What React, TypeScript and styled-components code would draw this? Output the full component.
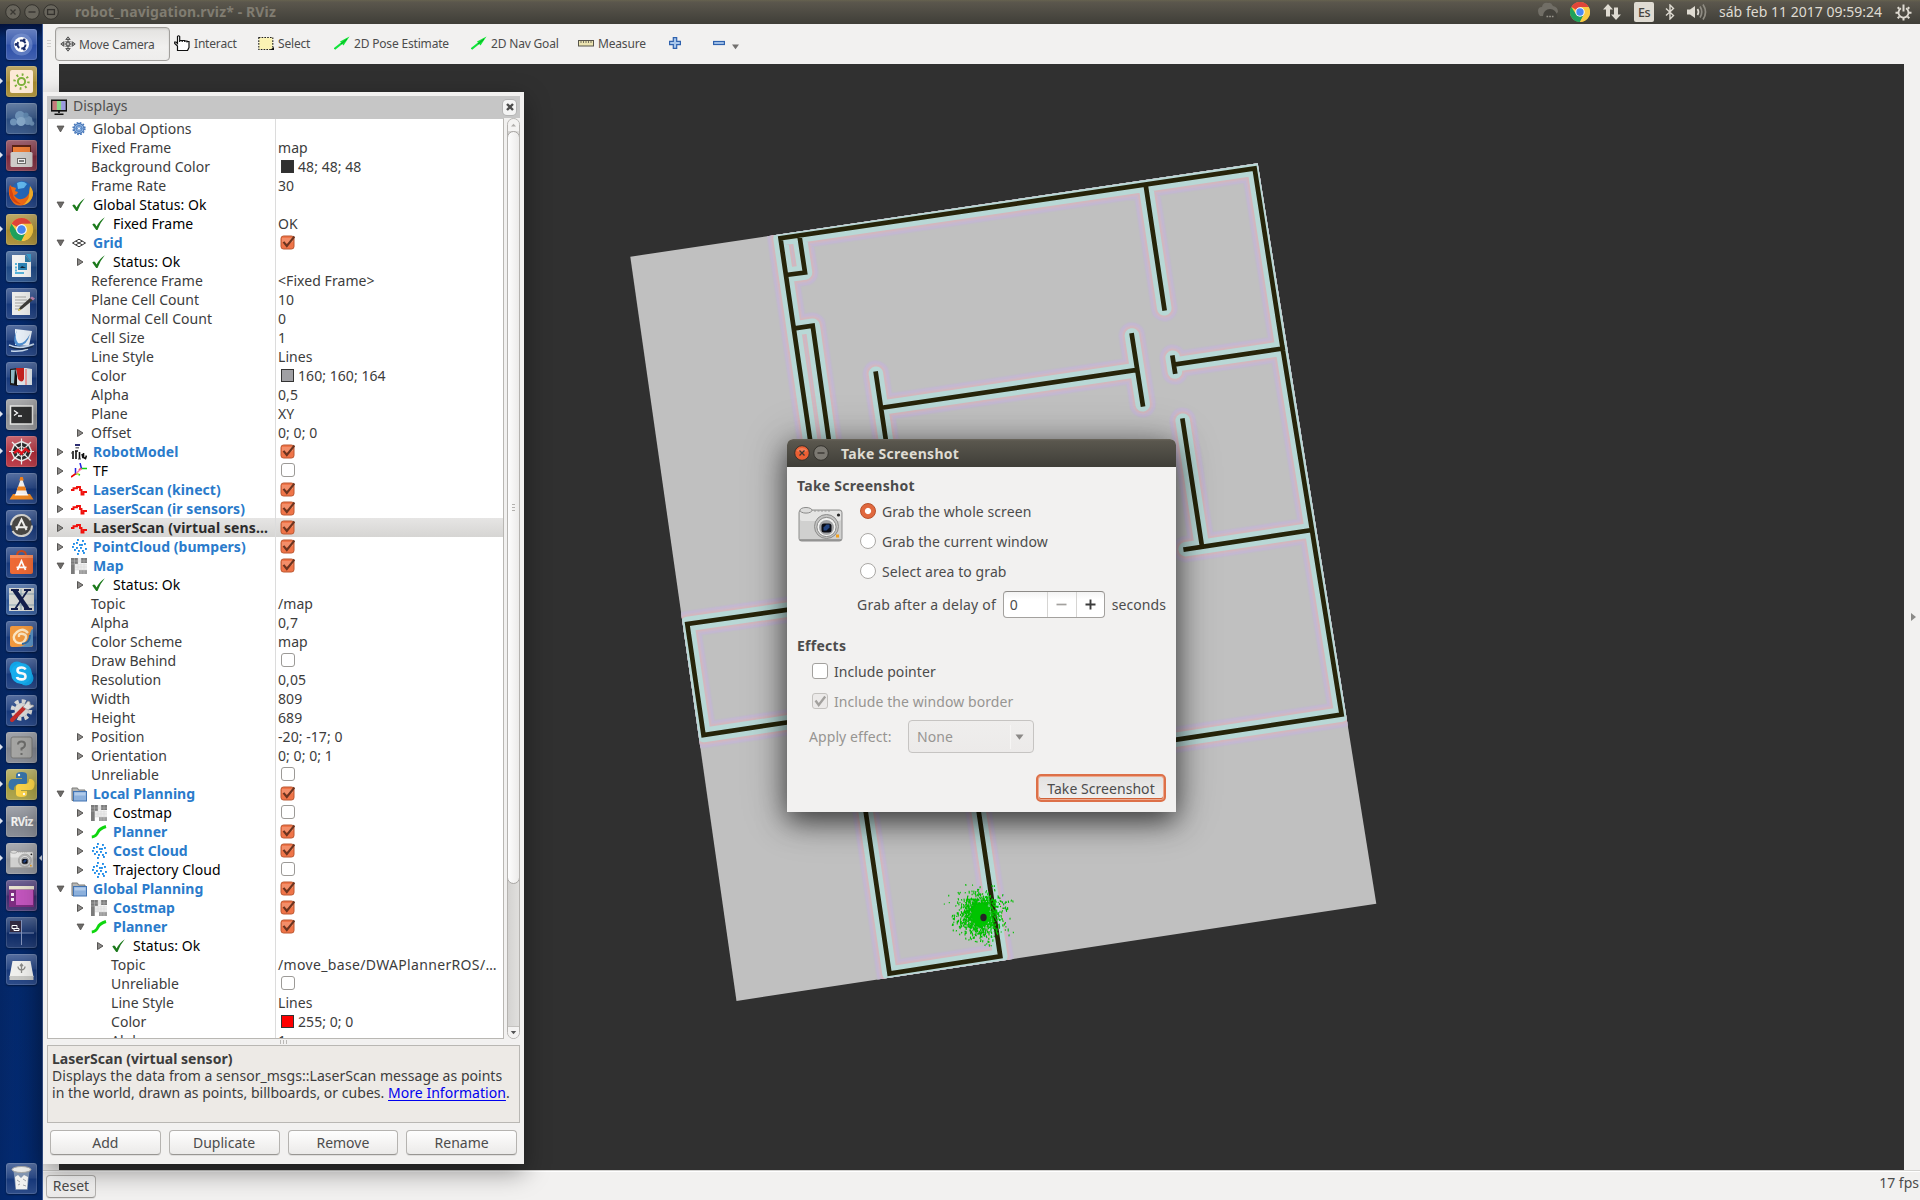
import React from 'react';
import styled, { createGlobalStyle, css } from 'styled-components';

const Global = createGlobalStyle`
  * { box-sizing: border-box; }
  html, body { margin: 0; padding: 0; background: #303030; }
  body { font-family: "Noto Sans", "Open Sans", sans-serif; font-size: 14px; color: #3c3c3c; overflow: hidden; }
  svg { display: block; flex: none; }
`;

/* ---------- frame ---------- */

const Screen = styled.div`
  position: relative;
  width: 1920px;
  height: 1200px;
  display: flex;
  flex-direction: column;
  overflow: hidden;
`;

const TopPanel = styled.header`
  height: 24px;
  flex: none;
  display: flex;
  align-items: center;
  padding: 0 8px 0 5px;
  background: linear-gradient(#66624f 0, #5b574d 2px, #3f3e38 100%);
`;

const PanelButtons = styled.div`
  display: flex;
  gap: 3px;
`;

const PanelTitle = styled.div`
  margin-left: 16px;
  font-weight: 700;
  font-size: 14px;
  line-height: 24px;
  color: #807c71;
  letter-spacing: 0.13px;
`;

const Tray = styled.div`
  margin-left: auto;
  display: flex;
  align-items: center;
`;

const TrayItem = styled.div<{ $w: number; $gap: number }>`
  width: ${(p) => p.$w}px;
  margin-right: ${(p) => p.$gap}px;
`;

const Keyboard = styled.div`
  width: 20px;
  height: 20px;
  border-radius: 2px;
  background: #dfdbd2;
  color: #45433d;
  font-size: 12.5px;
  font-weight: 500;
  line-height: 21px;
  text-align: center;
  letter-spacing: -0.5px;
`;

const Clock = styled.div`
  width: 163px;
  white-space: nowrap;
  font-size: 14px;
  line-height: 24px;
  color: #dfdbd2;
  letter-spacing: 0.02px;
`;

const Body = styled.div`
  flex: 1;
  display: flex;
  min-height: 0;
`;

/* ---------- launcher ---------- */

const Launcher = styled.nav`
  width: 43px;
  flex: none;
  display: flex;
  flex-direction: column;
  gap: 6px;
  padding: 5px 5px 6px 6px;
  background: linear-gradient(90deg, rgba(0, 0, 0, 0.08), transparent 40%, rgba(0, 0, 0, 0.1)),
    linear-gradient(#02133f 0, #052a70 14px, #052867 60%, #032a72 100%);
  border-right: 1px solid #3c5a97;
`;

const Tile = styled.div<{ $bg?: string; $last?: boolean }>`
  position: relative;
  width: 31px;
  height: 31px;
  flex: none;
  border-radius: 3px;
  background: linear-gradient(rgba(255, 255, 255, 0.28), rgba(255, 255, 255, 0.08) 48%, rgba(255, 255, 255, 0) 52%, rgba(255,255,255,0.1)),
    ${(p) => p.$bg || '#17397c'};
  box-shadow: inset 0 0 0 1px rgba(255, 255, 255, 0.13), 0 1px 2px rgba(0, 0, 0, 0.4);
  ${(p) => p.$last && css`margin-top: auto;`}
`;

const Pip = styled.i<{ $right?: boolean }>`
  position: absolute;
  top: 12px;
  ${(p) => (p.$right ? 'right: -5px; border-right: 3px solid #dde3ee;' : 'left: -6px; border-left: 3px solid #dde3ee;')}
  border-top: 3px solid transparent;
  border-bottom: 3px solid transparent;
`;

/* ---------- main window ---------- */

const Main = styled.main`
  flex: 1;
  display: flex;
  flex-direction: column;
  min-width: 0;
  background: #f2f1f0;
`;

const Toolbar = styled.div`
  height: 40px;
  flex: none;
  display: flex;
  align-items: center;
  padding-left: 4px;
`;

const Grip = styled.div`
  width: 4px;
  height: 8px;
  margin-right: 4px;
  background: repeating-linear-gradient(#cfcecc 0 1px, transparent 1px 3px);
`;

const Tool = styled.div<{ $w: number; $active?: boolean }>`
  width: ${(p) => p.$w}px;
  height: 34px;
  flex: none;
  display: flex;
  align-items: center;
  gap: 4px;
  padding: 0 0 2px 4px;
  white-space: nowrap;
  font-size: 12px;
  letter-spacing: -0.18px;
  color: #4c4c4c;
  ${(p) =>
    p.$active &&
    css`
      gap: 3px;
      padding-bottom: 0;
      border: 1px solid #a19f9c;
      border-radius: 4px;
      background: linear-gradient(#e3e2e0, #f1f0ef 60%, #eeedec);
      box-shadow: inset 0 1px 2px rgba(0, 0, 0, 0.12);
    `}
`;

const Middle = styled.div`
  flex: 1;
  display: flex;
  align-items: center;
  padding-left: 16px;
`;

const Viewport = styled.div`
  width: 1845px;
  height: 1106px;
  background: #303030;
`;

const Collapse = styled.i`
  margin-left: 7px;
  border-left: 5px solid #8b8a88;
  border-top: 4px solid transparent;
  border-bottom: 4px solid transparent;
`;

const StatusBar = styled.footer`
  height: 30px;
  flex: none;
  display: flex;
  justify-content: space-between;
  align-items: center;
  padding: 1px 1px 0 3px;
  border-top: 1px solid #d3d2d0;
  box-shadow: inset 0 1px 0 #fff;
`;

const Fps = styled.div`
  padding-bottom: 8px;
  color: #4c4c4c;
`;

const Button = styled.button<{ $w: number; $h: number }>`
  width: ${(p) => p.$w}px;
  height: ${(p) => p.$h}px;
  padding: 0;
  border: 1px solid #b5b3b0;
  border-bottom-color: #989693;
  border-radius: 4px;
  background: linear-gradient(#fefefe, #f3f2f1 60%, #ebeae9);
  box-shadow: 0 1px 0 rgba(0, 0, 0, 0.08);
  font: inherit;
  line-height: 1;
  color: #4c4c4c;
`;

/* ---------- displays window ---------- */

const Displays = styled.section`
  position: absolute;
  left: 43px;
  top: 92px;
  width: 481px;
  height: 1072px;
  padding: 4px;
  display: flex;
  flex-direction: column;
  background: #f2f1f0;
  box-shadow: 0 8px 24px rgba(0, 0, 0, 0.4);
`;

const DisplaysHead = styled.div`
  height: 22px;
  flex: none;
  display: flex;
  align-items: center;
  gap: 6px;
  padding: 0 4px;
  background: #c6c6c6;
  color: #505050;
  line-height: 20px;
`;

const HeadText = styled.span`
  padding-bottom: 2px;
`;

const CloseBox = styled.div`
  margin-left: auto;
  width: 13px;
  height: 15px;
  display: flex;
  align-items: center;
  justify-content: center;
  border-radius: 4px;
  background: #f4f4f4;
  box-shadow: 0 0 0 1px #b4b4b4;
`;

const TreeArea = styled.div`
  display: flex;
  gap: 3px;
  height: 921px;
  flex: none;
`;

const Tree = styled.div`
  width: 457px;
  border: 1px solid #b9b7b3;
  border-top-color: #c6c6c6;
  background: #fff;
  overflow: hidden;
`;

const Row = styled.div<{ $selected?: boolean }>`
  height: 19px;
  display: flex;
  ${(p) => p.$selected && 'background: linear-gradient(#e6e5e4, #d6d5d3);'}
`;

type Tone = 'plain' | 'ok' | 'on' | 'sel';
const toneColor: Record<Tone, string> = { plain: '#3c3c3c', ok: '#000', on: '#2a7bcb', sel: '#2c2c2c' };

const NameCell = styled.div<{ $level: number; $tone: Tone }>`
  width: 227px;
  flex: none;
  display: flex;
  align-items: center;
  padding-left: ${(p) => 7 + p.$level * 20}px;
  white-space: nowrap;
  overflow: hidden;
  color: ${(p) => toneColor[p.$tone]};
  font-weight: ${(p) => (p.$tone === 'on' || p.$tone === 'sel' ? 700 : 400)};
  letter-spacing: ${(p) => (p.$tone === 'sel' ? 0.13 : p.$tone === 'on' ? 0.04 : 0.04)}px;
`;

const Expander = styled.span`
  width: 16px;
  height: 19px;
  flex: none;
  display: flex;
  align-items: center;
`;

const RowIcon = styled.span`
  width: 16px;
  margin-right: 6px;
  flex: none;
`;

const ValueCell = styled.div<{ $wide?: boolean }>`
  flex: 1;
  display: flex;
  align-items: center;
  padding-left: 2px;
  border-left: 1px solid #dcdcdc;
  white-space: nowrap;
  letter-spacing: ${(p) => (p.$wide ? 0.34 : 0.06)}px;
`;

const Swatch = styled.i<{ $color: string }>`
  width: 13px;
  height: 13px;
  margin: 0 4px 0 3px;
  border: 1px solid #333;
  background: ${(p) => p.$color};
`;

const Unchecked = styled.i`
  width: 14px;
  height: 14px;
  margin: 0 0 1px 3px;
  border: 1px solid #9c9a97;
  border-radius: 3px;
  background: #fff;
`;

const Scrollbar = styled.div`
  width: 13px;
  display: flex;
  flex-direction: column;
  border: 1px solid #b5b3b0;
  border-radius: 7px;
  background: linear-gradient(90deg, #d4d3d1, #e0dfdd);
  overflow: hidden;
`;

const ScrollButton = styled.div<{ $down?: boolean }>`
  height: 12px;
  flex: none;
  display: flex;
  align-items: center;
  justify-content: center;
  background: #f4f3f2;
  ${(p) => p.$down && 'margin-top: auto; border-top: 1px solid #c4c2bf;'}
`;

const Thumb = styled.div`
  height: 753px;
  margin: 0 -1px;
  display: flex;
  align-items: center;
  justify-content: center;
  border: 1px solid #a8a6a3;
  border-radius: 7px;
  background: linear-gradient(90deg, #fdfdfd, #ecebea);
`;

const ThumbGrip = styled.i`
  width: 3px;
  height: 8px;
  background: repeating-linear-gradient(#b3b1ae 0 1px, transparent 1px 3px);
`;

const Splitter = styled.div`
  height: 6px;
  flex: none;
  display: flex;
  align-items: center;
  justify-content: center;
  &::after {
    content: '';
    width: 7px;
    height: 4px;
    background: repeating-linear-gradient(90deg, #bbb9b6 0 1px, transparent 1px 3px);
  }
`;

const Description = styled.div`
  height: 78px;
  flex: none;
  padding: 4px 4px;
  border: 1px solid #b9b7b3;
  background: #edeae6;
  line-height: 17px;
  white-space: nowrap;
  letter-spacing: 0.03px;
`;

const More = styled.a`
  color: #0000ee;
  text-decoration: underline;
  text-underline-offset: 2px;
`;

const DisplayButtons = styled.div`
  display: flex;
  gap: 8px;
  padding: 7px 3px 0;
`;

/* ---------- dialog ---------- */

const Dialog = styled.section`
  position: absolute;
  left: 787px;
  top: 439px;
  width: 389px;
  height: 373px;
  display: flex;
  flex-direction: column;
  border-radius: 6px 6px 0 0;
  background: #f2f1f0;
  color: #4c4c4c;
  letter-spacing: 0.08px;
  box-shadow: 0 9px 28px rgba(0, 0, 0, 0.62), 0 4px 46px rgba(0, 0, 0, 0.25);
`;

const DialogBar = styled.div`
  height: 28px;
  flex: none;
  display: flex;
  align-items: center;
  gap: 3px;
  padding-left: 7px;
  border-radius: 6px 6px 0 0;
  background: linear-gradient(#6a665b 0, #5a574e 2px, #3f3e38 100%);
`;

const DialogTitle = styled.div`
  margin-left: 9px;
  font-weight: 700;
  letter-spacing: 0.3px;
  color: #dfdbd2;
`;

const DialogBody = styled.div`
  flex: 1;
  display: flex;
  flex-direction: column;
  padding: 9px 10px 10px;
`;

const Heading = styled.h2`
  margin: 0;
  font-size: 14px;
  line-height: 19px;
  font-weight: 700;
  letter-spacing: 0.27px;
`;

const GrabArea = styled.div`
  display: flex;
  padding-left: 1px;
`;

const CameraCell = styled.div`
  width: 62px;
  padding-top: 12px;
`;

const Options = styled.div<{ $indent: number; $top: number }>`
  display: flex;
  flex-direction: column;
  padding: ${(p) => p.$top}px 0 0 ${(p) => p.$indent}px;
`;

const Option = styled.label<{ $off?: boolean }>`
  height: 30px;
  display: flex;
  align-items: center;
  gap: 6px;
  color: ${(p) => (p.$off ? '#979592' : '#4c4c4c')};
`;

const Radio = styled.i<{ $on?: boolean }>`
  width: 16px;
  height: 16px;
  border-radius: 50%;
  border: 1px solid ${(p) => (p.$on ? '#b8502a' : '#aaa8a5')};
  background: ${(p) => (p.$on ? 'radial-gradient(#fff 0 2.6px, #e0683e 3.6px)' : '#fff')};
`;

const Check = styled.i<{ $off?: boolean }>`
  width: 16px;
  height: 16px;
  display: flex;
  border: 1px solid ${(p) => (p.$off ? '#c4c2bf' : '#a3a19e')};
  border-radius: 3px;
  background: ${(p) => (p.$off ? '#eceae9' : '#fff')};
`;

const DelayRow = styled.div`
  display: flex;
  align-items: center;
  height: 36px;
  padding-left: 60px;
  white-space: nowrap;
`;

const DelayLabel = styled.span`
  letter-spacing: 0.22px;
`;

const Spinner = styled.div`
  width: 102px;
  height: 27px;
  margin: 0 7px 0 auto;
  display: flex;
  border: 1px solid #a3a19e;
  border-top-color: #8d8b88;
  border-radius: 4px;
  background: linear-gradient(#f4f4f4, #fff 30%);
`;

const SpinCell = styled.div<{ $w: number; $first?: boolean }>`
  width: ${(p) => p.$w}px;
  display: flex;
  align-items: center;
  justify-content: ${(p) => (p.$first ? 'flex-start' : 'center')};
  padding-left: ${(p) => (p.$first ? 6 : 0)}px;
  border-left: ${(p) => (p.$first ? 'none' : '1px solid #d6d5d3')};
`;

const EffectRow = styled.div`
  display: flex;
  align-items: center;
  height: 33px;
  margin-top: 4px;
  padding-left: 12px;
  color: #979592;
`;

const EffectLabel = styled.span`
  width: 99px;
`;

const Combo = styled.div`
  width: 126px;
  height: 33px;
  display: flex;
  align-items: center;
  justify-content: space-between;
  padding: 0 0 0 8px;
  border: 1px solid #c6c4c2;
  border-radius: 4px;
  background: linear-gradient(#efeeed, #eceae9);
`;

const ComboArrow = styled.span`
  height: 24px;
  width: 23px;
  display: flex;
  align-items: center;
  padding-left: 4px;
  border-left: 1px solid #f6f5f4;
`;

const TakeButton = styled.button`
  width: 130px;
  height: 28px;
  margin: auto 0 0 auto;
  padding: 0;
  border: 2px solid #dd7048;
  border-radius: 5px;
  background: linear-gradient(#e2e1e0, #f1f0ef);
  box-shadow: inset 0 0 0 1px #eda98e, inset 0 -1px 0 1px #cf6238;
  font: inherit;
  letter-spacing: 0.05px;
  color: #4c4c4c;
`;

/* ---------- small drawings ---------- */

const Svg = ({ s = 16, h, vb, children }: { s?: number; h?: number; vb?: string; children: React.ReactNode }) => (
  <svg width={s} height={h ?? s} viewBox={vb ?? `0 0 ${s} ${h ?? s}`} fill="none">
    {children}
  </svg>
);

const WinButton = ({ kind, hot }: { kind: 'close' | 'min' | 'max'; hot?: 'red' | 'gray' }) => (
  <Svg s={16}>
    <circle cx="8" cy="8" r="7.3" fill={hot === 'red' ? '#ea5f33' : hot === 'gray' ? '#7c7972' : '#68655c'} stroke="#34322d" />
    {hot === 'red' && <path d="M2.5 6a6 5 0 0 1 11 0q-5.5 2-11 0" fill="#f58a66" opacity=".7" />}
    {kind === 'close' && <path d="M5.500 5.500l5 5m0-5l-5 5" stroke="#3a3833" strokeWidth="1.300" />}
    {kind === 'min' && <path d="M4.500 8h7" stroke="#33312d" strokeWidth="1.300" />}
    {kind === 'max' && <rect x="4.600" y="5.600" width="6.800" height="4.800" stroke="#33312d" strokeWidth="1.300" />}
  </Svg>
);

const ChromeMark = ({ c = 10, r = 10 }: { c?: number; r?: number }) => (
  <g transform={`translate(${c} ${c}) scale(${r / 10})`}>
    <circle r="10" fill="#fbcb43" />
    <path d="M0 0L-8.700-5A10 10 0 0 1 8.700-5L0-4.500z" fill="#e0453a" />
    <path d="M-8.700-5A10 10 0 0 0 0 10L4.200 2.200L-4 2z" fill="#1fa15d" />
    <path d="M8.700-5H0v2l4 5L0 10A10 10 0 0 0 8.700-5" fill="#fbcb43" />
    <circle r="4.700" fill="#fff" />
    <circle r="3.700" fill="#4a8af4" />
  </g>
);

const CameraArt = () => (
  <>
    <rect x="1" y="3" width="43" height="31" rx="2.500" fill="#d0d0cf" stroke="#8e8e8d" />
    <rect x="2" y="4" width="41" height="10" rx="2" fill="#e4e4e3" />
    <path d="M2 33h41" stroke="#8a8a89" strokeWidth="1.500" />
    <ellipse cx="8" cy="3.300" rx="6" ry="2.800" fill="#dcdcdb" stroke="#8a8a89" />
    <path d="M16 4h16" stroke="#999" strokeDasharray="2 1.500" />
    <circle cx="28.500" cy="19.500" r="12" fill="#c4c4c3" stroke="#8b8b8a" />
    <circle cx="28.500" cy="20" r="9.600" fill="#f1f1f0" stroke="#8a8a89" />
    <circle cx="28.500" cy="20.500" r="7.500" fill="#a3a4a6" />
    <rect x="23.500" y="16.500" width="10" height="9" rx="2.500" fill="#0b0d16" />
    <path d="M25.500 20.500l3-3h3v3l-3 3h-3z" fill="#23437f" />
    <circle cx="40.500" cy="8" r="1.600" fill="#222" />
    <rect x="38" y="27.500" width="3" height="3" fill="#f0a020" />
  </>
);

type IconName =
  | 'gear' | 'check' | 'grid' | 'robot' | 'tf' | 'laser' | 'cloud' | 'map' | 'folder' | 'path';

const cloudDots = [[6, 0], [11, 1], [2, 4], [5, 3], [8, 5], [13, 4], [1, 7], [5, 8], [9, 8], [3, 10], [14, 9], [7, 11], [11, 11], [6, 14], [12, 13], [10, 5]];

const icons: Record<IconName, React.ReactNode> = {
  gear: (
    <>
      <circle cx="8" cy="7.500" r="5" fill="#8fb4e2" stroke="#3566ab" strokeWidth="1" />
      <circle cx="8" cy="7.500" r="5.900" stroke="#4677ba" strokeWidth="1.500" strokeDasharray="1.700 1.390" />
      <circle cx="8" cy="7.500" r="3" stroke="#4677ba" strokeWidth=".8" />
      <path d="M8 4v7M4.500 7.500h7" stroke="#5b8bc9" strokeWidth=".8" />
      <circle cx="8" cy="7.500" r="1" fill="#fff" />
    </>
  ),
  check: <path d="M1.300 8.600Q2.800 6.900 4 8l1.600 2.600Q8.200 5 13.800 1.300 9.200 6.500 6.500 14H5.200z" fill="#1c7a1c" />,
  grid: <path d="M1.500 8L8 4.200 14.500 8 8 11.800zM4.700 6.100l6.600 3.800M4.700 9.900l6.600-3.800" stroke="#333" strokeWidth="1" />,
  robot: (
    <>
      <rect x="4" y="0" width="5" height="2" fill="#2d2f73" />
      <rect x="4.500" y="3" width="3.500" height="1.500" fill="#777" />
      <path d="M2 7v8M5 6.500V15M4 7h3M8.500 8v7M11 10l1 4M12.500 9v4.500l2 1 1-3" stroke="#111" strokeWidth="1.600" />
      <path d="M.5 9.500l1-2M7 15h3" stroke="#444" />
    </>
  ),
  tf: (
    <>
      <path d="M0 14l5-3.500M8 7l3-2" stroke="#e00" strokeWidth="1.600" />
      <path d="M4.500 10.500V5M10.500 5.500L9 0" stroke="#22d" strokeWidth="1.500" />
      <path d="M10.500 5.500H16M5 10.500L9 12" stroke="#1c1" strokeWidth="1.500" />
      <path d="M5 10.500l5.500-5" stroke="#f7a" strokeWidth="1.400" />
      <path d="M6 11.500l2-1" stroke="#ee4" strokeWidth="1.500" />
    </>
  ),
  laser: <path d="M0 8h2.500V6.300H6V5h3v3h1.500v4.500h2V10H16" stroke="#f0100c" strokeWidth="1.900" />,
  cloud: (
    <>
      {cloudDots.map(([x, y], i) => (
        <rect key={i} x={x} y={y} width="1.900" height="1.900" fill="#1f8ce8" />
      ))}
    </>
  ),
  map: (
    <>
      <path d="M0 0h7v6H4v10H0zM10 0h6v5h-6z" fill="#7b7b7b" />
      <path d="M7 0h3v5H7zM4 6h12v6H4z" fill="#ececec" />
      <path d="M8 12h8v4H8z" fill="#9c9c9c" />
      <path d="M0 3h16M0 6h16M4 9h12M4 12h12M3.500 0v16M7 0v12M10 0v16M13 0v16" stroke="#cfcfcf" strokeWidth=".4" />
    </>
  ),
  folder: (
    <>
      <path d="M1 14.500V2h5.500l1 2H14v10.500z" fill="#b7b7b4" stroke="#7b7b78" />
      <rect x="2.500" y="5.500" width="13" height="9.500" fill="#8cb0dc" stroke="#4274b3" />
      <path d="M3.500 6.500h11v3h-11z" fill="#b1cbea" />
    </>
  ),
  path: <path d="M.8 13Q5 12.600 6.800 8.500T15 2.500" stroke="#0ed60e" strokeWidth="2.900" />,
};

const CheckedBox = () => (
  <Svg s={17} h={17} vb="0 0 17 17">
    <g transform="translate(2.500 1)">
      <rect x=".5" y="1" width="13" height="13" rx="2.500" fill="#ef7448" stroke="#bb5730" />
      <path d="M1.500 3h11v4q-6 2-11 0z" fill="#f59a78" opacity=".7" />
      <path d="M3 6.800l3.300 4.200L14 1.500" stroke="#6b3420" strokeWidth="2.100" />
    </g>
  </Svg>
);

const Arrow = ({ open }: { open?: boolean }) => (
  <Svg s={10}>
    {open ? (
      <path d="M2 2h7L5.500 8z" fill="#6c6a68" stroke="#4a4846" strokeWidth=".7" />
    ) : (
      <path d="M2.500 1.500v7L8 5z" fill="#8c8a88" stroke="#4a4846" strokeWidth=".9" />
    )}
  </Svg>
);

/* ---------- toolbar ---------- */

const NavArrow = () => (
  <Svg>
    <path d="M.5 14L8 8" stroke="#12e33b" strokeWidth="2.200" />
    <path d="M6 6.500l9.500-5L9.500 10.500z" fill="#10e832" />
    <path d="M7 9l6-5" stroke="#0a9a2a" strokeWidth="1" />
  </Svg>
);

const tools: { label: string; w: number; active?: boolean; icon: React.ReactNode }[] = [
  {
    label: 'Move Camera', w: 115, active: true,
    icon: (
      <Svg>
        <path d="M8 1v14M1 8h14M8 .8L5.800 3.500h4.400zM8 15.200l-2.200-2.700h4.400zM.8 8l2.700-2.200v4.400zM15.200 8l-2.700-2.200v4.400z" stroke="#4a4a4a" strokeWidth=".9" fill="#fff" />
        <ellipse cx="8" cy="8" rx="5" ry="2.500" stroke="#666" strokeWidth=".8" />
        <circle cx="8" cy="8" r="2" fill="#bbb" stroke="#444" />
      </Svg>
    ),
  },
  {
    label: 'Interact', w: 84,
    icon: (
      <Svg>
        <path d="M3.500 15.500V11L.7 8.500V7H2l1.500 1.500V1.500Q4.500 0 5.700 1.500V7V5.500h2.500V7V5.500h2.500V7V6h2.300V7.500V6.500h2v6l-1.500 3z" fill="#fff" stroke="#111" strokeWidth="1.200" />
      </Svg>
    ),
  },
  {
    label: 'Select', w: 76,
    icon: (
      <Svg>
        <rect x=".8" y="2.500" width="14" height="12" fill="#fbf3b4" stroke="#222" strokeWidth="1.100" strokeDasharray="1.600 1.200" />
        <path d="M12 15h4v-3z" fill="#111" />
      </Svg>
    ),
  },
  { label: '2D Pose Estimate', w: 137, icon: <NavArrow /> },
  { label: '2D Nav Goal', w: 107, icon: <NavArrow /> },
  {
    label: 'Measure', w: 91,
    icon: (
      <Svg>
        <rect x=".5" y="5.500" width="15" height="5.500" fill="#ebe3b0" stroke="#57544a" />
        <path d="M3 6v2M5.500 6v2M8 6v2M10.500 6v2M13 6v2" stroke="#57544a" strokeWidth=".8" />
      </Svg>
    ),
  },
  {
    label: '', w: 44,
    icon: (
      <Svg s={12}>
        <path d="M4.300 .6h3.400v3.700h3.700v3.400H7.700v3.700H4.300V7.700H.6V4.300h3.700z" fill="#a9c7ec" stroke="#2f62ae" strokeWidth="1.200" />
      </Svg>
    ),
  },
  {
    label: '', w: 50,
    icon: (
      <Svg s={28} h={16} vb="0 0 28 16">
        <rect x=".6" y="6.500" width="10.800" height="3" fill="#a9c7ec" stroke="#2f62ae" strokeWidth="1.200" />
        <path d="M19 9.500h7l-3.500 4.700z" fill="#73716f" />
      </Svg>
    ),
  },
];

/* ---------- launcher contents ---------- */

const launcherItems: { bg?: string; pip?: boolean; pipRight?: boolean; art: React.ReactNode }[] = [
  {
    bg: '#2c4fa8',
    art: (
      <>
        <circle cx="15.500" cy="15.500" r="11" fill="#8fa6dc" opacity=".45" />
        <circle cx="15.500" cy="15.500" r="7.500" fill="#fff" />
        <circle cx="15.500" cy="15.500" r="4" stroke="#1d2f6b" strokeWidth="2" strokeDasharray="6.400 2" />
        <circle cx="10" cy="15.500" r="1.400" fill="#1d2f6b" /><circle cx="18.200" cy="10.800" r="1.400" fill="#1d2f6b" /><circle cx="18.200" cy="20.200" r="1.400" fill="#1d2f6b" />
      </>
    ),
  },
  {
    bg: '#a5892e', pip: true,
    art: (
      <>
        <rect x="4" y="4" width="23" height="23" rx="2" fill="#fde9d6" />
        <circle cx="15.500" cy="15.500" r="3.600" stroke="#7fb13c" strokeWidth="2" />
        <circle cx="15.500" cy="15.500" r="7" stroke="#7fb13c" strokeWidth="2.400" strokeDasharray="1.800 3.700" />
      </>
    ),
  },
  {
    bg: '#2b4d80',
    art: (
      <g fill="#6f93b8">
        <circle cx="14" cy="13" r="5" /><circle cx="7.500" cy="19" r="3.500" /><circle cx="22" cy="17.500" r="4.500" /><circle cx="15" cy="18.500" r="4.500" fill="#86a8c8" /><circle cx="20" cy="12" r="2.600" fill="#5f86ad" /><circle cx="26" cy="20.500" r="2.300" />
      </g>
    ),
  },
  {
    bg: '#7d2b3d', pip: true,
    art: (
      <>
        <path d="M6 5h19v9H6z" fill="#5c2416" /><path d="M7 7h17v6H7z" fill="#ee7f38" />
        <rect x="4.500" y="12" width="22" height="15" rx="1.500" fill="#cfcdca" /><rect x="11.500" y="18.500" width="8" height="5" fill="#f2f2f2" stroke="#6e6d6a" /><path d="M13 21h5" stroke="#555" strokeWidth="1.500" />
      </>
    ),
  },
  {
    art: (
      <>
        <circle cx="16" cy="14.500" r="10.500" fill="#2467b8" /><path d="M11 6q6-3 10 1l-3 4-6 1z" fill="#62b8ee" />
        <path d="M4 8q1 2 3 2l3 1-1 3 3 1q-1 3-4 3 3 5 8 4t7-6l1-6q5 6 1 12-4 6-10 6.500T6 24q-5-6-2-16" fill="#ee6a16" />
        <path d="M24 9q5 6 2 12-3 6-9 7 6-5 6-10z" fill="#fbb52a" />
        <path d="M4 8q-2 9 2 15 4 4 9 4-8-5-8-10z" fill="#d8450f" />
      </>
    ),
  },
  { bg: '#a5892e', pip: true, art: <g transform="translate(3.500 3.500)"><ChromeMark c={12} r={11.500} /></g> },
  {
    bg: '#1f4a86',
    art: (
      <>
        <path d="M20 3h5v8z" fill="#3ba0d0" /><path d="M6 4h13l6 7v15H6z" fill="#f2f2f1" /><path d="M19 4v7h6z" fill="#2e7ca8" />
        <rect x="12" y="12" width="9" height="7" fill="#2f86b8" /><path d="M9 13h2M9 22h9M9 16.500h2M9 19.500h2" stroke="#57b3da" strokeWidth="2" /><path d="M14 17l2-2 4 2z" fill="#123" />
      </>
    ),
  },
  {
    art: (
      <>
        <rect x="6" y="4" width="18" height="23" fill="#ececea" /><path d="M9 9h11M9 12h12M9 15h10M9 18h8M9 21h6" stroke="#a3a3a0" /><path d="M12 23l2-4 10-9 3 2-11 9z" fill="#3e3c38" /><path d="M24 10l2-1.500 3 2-2 2z" fill="#c486b0" /><path d="M12 23l1-2.500 2 1.500z" fill="#e8d044" />
      </>
    ),
  },
  {
    art: (
      <>
        <path d="M9 4l17 2-3 15-14-1z" fill="#e8f0f8" /><path d="M11 5q-3 8 1 13 6 2 12-9-3 12-12 12-7-3-1-16" fill="#4f8fd0" /><path d="M3 20q11 5 25-1M5 26q10 1 17-2" stroke="#c6d8ec" strokeWidth="1.700" /><path d="M3 21.500q11 5 24 0" stroke="#1c2c44" strokeWidth="1.200" />
      </>
    ),
  },
  {
    art: (
      <>
        <path d="M4 7l8-1v18l-8-1z" fill="#1a1a1c" /><path d="M5 8l6-.5V22l-6-1z" fill="#8fb7c4" /><path d="M11 6h9l6 1v16H11z" fill="#dfe6ea" /><path d="M10 6h8v11q-2 5-6 0z" fill="#c4211f" /><path d="M9 6l2 8v9l-3-1z" fill="#111" /><path d="M20 7v16" stroke="#e88" strokeWidth="1.500" />
      </>
    ),
  },
  {
    bg: '#8c8d90', pip: true,
    art: (
      <>
        <rect x="4.500" y="7" width="22" height="18" fill="#2e2f30" stroke="#e6e6e4" strokeWidth="1.500" /><path d="M8 11.500l3.500 2.500L8 16.500M12 17h4" stroke="#fff" strokeWidth="1.300" />
      </>
    ),
  },
  {
    bg: '#b32d3a', pip: true,
    art: (
      <>
        <path d="M15.500 5.500l7 3 3 7-3 6.500-7 3-7-3-3-6.500 3-7z" fill="#2a2a2b" stroke="#e9e9e8" strokeWidth="1.500" />
        <path d="M15.500 2.500v26M3 15.500h6M22 15.500h6M6 6l19 19M25 6L6 25" stroke="#f1f1f0" strokeWidth="1.200" />
        <path d="M15.500 10.500l3.500 1.500 1.500 3.500L19 19l-3.500 1.500L12 19l-1.500-3.500L12 12z" stroke="#e9e9e8" />
        <path d="M8 17l4-3 3.500 3.500 4-4.500 4 3" stroke="#e0141c" strokeWidth="2.600" />
      </>
    ),
  },
  {
    art: (
      <>
        <path d="M15.500 4l6 17h-12z" fill="#f4f3f1" /><path d="M14.300 4h2.500l1 3.500h-4.500zM12 13.500h7l1.300 4h-9.600z" fill="#f2821c" /><path d="M7 21h17l3.500 5.500h-24z" fill="#f08a22" /><path d="M9.500 21h12l1 1.500h-14z" fill="#fff" />
      </>
    ),
  },
  {
    art: (
      <>
        <circle cx="15.500" cy="15.500" r="10.500" fill="#494845" stroke="#d4d3cf" strokeWidth="2" strokeDasharray="27 6" /><path d="M10.500 20l5-10.500L20.500 20M9.500 17.300h12" stroke="#f2f2f0" strokeWidth="2" />
      </>
    ),
  },
  {
    art: (
      <>
        <path d="M11 9q0-5 4.500-5T20 9" stroke="#c94a1e" strokeWidth="2" /><path d="M4 8h23v17q0 2-2 2H6q-2 0-2-2z" fill="#ee6a35" /><path d="M4 8h23v3H4z" fill="#f58c5d" /><path d="M11.500 23l4-9 4 9M10.500 20.300h10" stroke="#fff" strokeWidth="1.800" />
      </>
    ),
  },
  {
    bg: '#2a5394',
    art: (
      <>
        <path d="M3 4h25v23H3z" fill="#d8d9d4" /><path d="M3 10h25M3 21h25M15 5v21" stroke="#8fa9b4" strokeWidth="1.200" /><path d="M8.500 6l13 19" stroke="#14204e" strokeWidth="4.500" /><path d="M22 6L9 25M5 6h8M18 6h7M5 25h7M18 25h8" stroke="#14204e" strokeWidth="1.800" />
      </>
    ),
  },
  {
    art: (
      <>
        <rect x="4" y="5" width="23" height="21" rx="2" fill="#f0983e" /><path d="M27 8v16q-1 2-4 2H8q13 1 15-9t4-9" fill="#5b93c4" /><path d="M22 12q-5-6-11-1t-1 10q6 3 9-2t-2-6-4 3" stroke="#fbe6c2" strokeWidth="2.400" /><path d="M24 14q0 8-8 9" stroke="#2f6ca8" strokeWidth="2" />
      </>
    ),
  },
  {
    art: (
      <>
        <circle cx="11" cy="11" r="7.500" fill="#12a5e8" /><circle cx="20" cy="20" r="7.500" fill="#12a5e8" /><circle cx="15.500" cy="15.500" r="10.500" fill="#18aeee" /><path d="M19.500 11.500q-1-2-4-2-4 0-4 2.800t4 3 4 3.200-4 2.900-4.500-2.400" stroke="#fff" strokeWidth="2.600" />
      </>
    ),
  },
  {
    art: (
      <>
        <circle cx="15.500" cy="15" r="7" fill="#d9d9d7" /><circle cx="15.500" cy="15" r="8.800" stroke="#d9d9d7" strokeWidth="4" strokeDasharray="3.900 3" /><path d="M6 25L18 13" stroke="#c52e2b" strokeWidth="4" strokeLinecap="round" /><path d="M17 12l5-6 2 1v3h3l1 1-6 4z" fill="#ecebea" stroke="#999" strokeWidth=".7" />
      </>
    ),
  },
  {
    bg: '#7f838c', pip: true,
    art: (
      <>
        <rect x="5" y="5" width="21" height="21" rx="2" fill="#a5a5a3" stroke="#767674" /><path d="M12 12.500q0-3 3.500-3t3.500 3-3.500 4v2M15.500 21v2" stroke="#6c6c6a" strokeWidth="2" />
      </>
    ),
  },
  {
    bg: '#a59c3f', pip: true,
    art: (
      <>
        <path d="M10 10V6q0-3 5.500-3T21 6v7q0 3-3 3h-6q-4 0-4 4v1H6q-4-1-3.500-6T7 10h9V9h-6z" fill="#3873a8" /><path d="M21 21v4q0 3-5.500 3T10 25v-7q0-3 3-3h6q4 0 4-4v-1h2q4 1 3.500 6T24 21h-9v1h6z" fill="#fbd448" /><circle cx="13" cy="6" r="1.200" fill="#fff" /><circle cx="18" cy="25" r="1.200" fill="#fff" />
      </>
    ),
  },
  {
    bg: '#7f838c', pip: true,
    art: <text x="15.500" y="20" textAnchor="middle" fontFamily="Open Sans, sans-serif" fontWeight="700" fontSize="12" letterSpacing="-.8" fill="#f2f2f0">RViz</text>,
  },
  { bg: '#8a8d94', pip: true, pipRight: true, art: <g transform="translate(3.500 7) scale(.54)"><CameraArt /></g> },
  {
    bg: '#3d2a6c',
    art: (
      <>
        <rect x="3" y="6" width="25" height="21" fill="#7d2d80" /><path d="M10 10h17v15H10z" fill="#c255bd" /><path d="M3 6h25v3.500H3z" fill="#e8e2cf" /><path d="M5 13h3v3H5zM5 18h3v3H5z" fill="#f0e6f0" />
      </>
    ),
  },
  {
    bg: '#0d2a66',
    art: (
      <>
        <path d="M15.500 3v25M3 16h25" stroke="#8494bb" /><path d="M4 4h11v11H4z" fill="#33293f" /><path d="M6 8.500h5v3H6zM8 11.500h5v2H8z" stroke="#fff" />
      </>
    ),
  },
  {
    art: (
      <>
        <path d="M6.500 7h18l3 16h-24z" fill="#f0f0ee" /><path d="M3.500 22h24v4h-24z" fill="#c9c9c6" /><path d="M15.500 10v9M12 12.500q0 3 3.500 3.500 3.500-.5 3.500-3.500M14 12l1.500-2 1.500 2" stroke="#8b8b88" strokeWidth="1.300" />
      </>
    ),
  },
  {
    art: (
      <>
        <path d="M7.500 7l2 20h12l2-20z" fill="#b9c4cc" opacity=".6" /><ellipse cx="15.500" cy="6.500" rx="9.500" ry="3" fill="#e9e9e7" stroke="#a6a6a4" /><path d="M9 14l3-2 3 3 3-3 4 2-1 12H10z" fill="#f2f2f0" /><path d="M11 17l3 2M17 16l3 2M12 22l2-1M17 22l3 1" stroke="#a3a7aa" />
      </>
    ),
  },
];

/* ---------- displays tree ---------- */

type TreeRow = {
  n: string;
  l: number;
  x?: 'open' | 'closed';
  i?: IconName;
  t?: Tone;
  v?: string;
  c?: string;
  b?: boolean;
  wide?: boolean;
};

const rows: TreeRow[] = [
  { n: 'Global Options', l: 0, x: 'open', i: 'gear' },
  { n: 'Fixed Frame', l: 1, v: 'map' },
  { n: 'Background Color', l: 1, v: '48; 48; 48', c: '#303030' },
  { n: 'Frame Rate', l: 1, v: '30' },
  { n: 'Global Status: Ok', l: 0, x: 'open', i: 'check', t: 'ok' },
  { n: 'Fixed Frame', l: 1, i: 'check', t: 'ok', v: 'OK' },
  { n: 'Grid', l: 0, x: 'open', i: 'grid', t: 'on', b: true },
  { n: 'Status: Ok', l: 1, x: 'closed', i: 'check', t: 'ok' },
  { n: 'Reference Frame', l: 1, v: '<Fixed Frame>' },
  { n: 'Plane Cell Count', l: 1, v: '10' },
  { n: 'Normal Cell Count', l: 1, v: '0' },
  { n: 'Cell Size', l: 1, v: '1' },
  { n: 'Line Style', l: 1, v: 'Lines' },
  { n: 'Color', l: 1, v: '160; 160; 164', c: '#a0a0a4' },
  { n: 'Alpha', l: 1, v: '0,5' },
  { n: 'Plane', l: 1, v: 'XY' },
  { n: 'Offset', l: 1, x: 'closed', v: '0; 0; 0' },
  { n: 'RobotModel', l: 0, x: 'closed', i: 'robot', t: 'on', b: true },
  { n: 'TF', l: 0, x: 'closed', i: 'tf', t: 'ok', b: false },
  { n: 'LaserScan (kinect)', l: 0, x: 'closed', i: 'laser', t: 'on', b: true },
  { n: 'LaserScan (ir sensors)', l: 0, x: 'closed', i: 'laser', t: 'on', b: true },
  { n: 'LaserScan (virtual sens…', l: 0, x: 'closed', i: 'laser', t: 'sel', b: true },
  { n: 'PointCloud (bumpers)', l: 0, x: 'closed', i: 'cloud', t: 'on', b: true },
  { n: 'Map', l: 0, x: 'open', i: 'map', t: 'on', b: true },
  { n: 'Status: Ok', l: 1, x: 'closed', i: 'check', t: 'ok' },
  { n: 'Topic', l: 1, v: '/map' },
  { n: 'Alpha', l: 1, v: '0,7' },
  { n: 'Color Scheme', l: 1, v: 'map' },
  { n: 'Draw Behind', l: 1, b: false },
  { n: 'Resolution', l: 1, v: '0,05' },
  { n: 'Width', l: 1, v: '809' },
  { n: 'Height', l: 1, v: '689' },
  { n: 'Position', l: 1, x: 'closed', v: '-20; -17; 0' },
  { n: 'Orientation', l: 1, x: 'closed', v: '0; 0; 0; 1' },
  { n: 'Unreliable', l: 1, b: false },
  { n: 'Local Planning', l: 0, x: 'open', i: 'folder', t: 'on', b: true },
  { n: 'Costmap', l: 1, x: 'closed', i: 'map', t: 'ok', b: false },
  { n: 'Planner', l: 1, x: 'closed', i: 'path', t: 'on', b: true },
  { n: 'Cost Cloud', l: 1, x: 'closed', i: 'cloud', t: 'on', b: true },
  { n: 'Trajectory Cloud', l: 1, x: 'closed', i: 'cloud', t: 'ok', b: false },
  { n: 'Global Planning', l: 0, x: 'open', i: 'folder', t: 'on', b: true },
  { n: 'Costmap', l: 1, x: 'closed', i: 'map', t: 'on', b: true },
  { n: 'Planner', l: 1, x: 'open', i: 'path', t: 'on', b: true },
  { n: 'Status: Ok', l: 2, x: 'closed', i: 'check', t: 'ok' },
  { n: 'Topic', l: 2, v: '/move_base/DWAPlannerROS/…', wide: true },
  { n: 'Unreliable', l: 2, b: false },
  { n: 'Line Style', l: 2, v: 'Lines' },
  { n: 'Color', l: 2, v: '255; 0; 0', c: '#ff0000' },
  { n: 'Alpha', l: 2, v: '1' },
];

/* ---------- map scene, in screen coordinates ---------- */

const ground = 'M630.300 256.700L1257.700 163.300L1376.300 903.700L736.500 1001z';

const walls = [
  'M810.300 441L780.500 238.300L1254.600 168.500L1282.700 349L1312 530L1341.600 714.500L1170 740.600',
  'M799.500 236L805 272.500L786 275',
  'M795 328.300L812.700 325.700L829 441',
  'M1145.700 185L1164.300 308.300',
  'M1131.900 335.400L1142.700 404.300',
  'M1136.700 370L881.700 407.700',
  'M875.900 373.700L886 441',
  'M1172.700 357.700L1174.900 371.600',
  'M1174 364.600L1282.700 348.500',
  'M1182.700 420.700L1202 546.500',
  'M1185.700 549.200L1312 530',
  'M790 609.300L687.300 624L703.500 735L790 722',
  'M865 807L889.500 973.600L1000.300 956.300L978 807',
].join('');

const makeParticles = () => {
  let seed = 7;
  const rnd = () => {
    seed = (seed * 16807) % 2147483647;
    return seed / 2147483647;
  };
  let d = '';
  for (let k = 0; k < 1250; k++) {
    const a = rnd() * Math.PI * 2;
    const r = Math.sqrt(-2 * Math.log(rnd() + 0.0001)) * 10.5;
    if (r > 38) continue;
    const x = 980 + Math.cos(a) * r;
    const y = 914.5 + Math.sin(a) * r;
    d += `M${x.toFixed(1)} ${y.toFixed(1)}l${(rnd() * 1.2 - 0.6).toFixed(1)} ${(1 + rnd() * 1.8).toFixed(1)}`;
  }
  return d;
};
const particles = makeParticles();

const Scene = () => (
  <svg width="1845" height="1106" viewBox="59 64 1845 1106" fill="none">
    <defs>
      <clipPath id="ground">
        <path d={ground} />
      </clipPath>
    </defs>
    <path d={ground} fill="#c0c0c0" />
    <g clipPath="url(#ground)" strokeLinejoin="round" strokeLinecap="round">
      <path d={walls} stroke="#c0bcc7" strokeWidth="27.500" />
      <path d={walls} stroke="#c3b8d1" strokeWidth="25" />
      <path d={walls} stroke="#cab8cb" strokeWidth="21" />
      <path d={walls} stroke="#d3b7bd" strokeWidth="18" />
      <path d={walls} stroke="#b8d8d6" strokeWidth="14.500" />
      <path d={walls} stroke="#26240a" strokeWidth="4.700" strokeLinecap="square" strokeLinejoin="miter" />
    </g>
    <path d={particles} stroke="#00bf00" strokeWidth="1.100" />
    <ellipse cx="981" cy="915" rx="9" ry="11" fill="#00c400" />
    <ellipse cx="983.500" cy="917.500" rx="3.200" ry="3.700" fill="#262626" />
  </svg>
);

export default function App() {
  return (
    <Screen>
      <Global />
      <TopPanel>
        <PanelButtons>
          <WinButton kind="close" />
          <WinButton kind="min" />
          <WinButton kind="max" />
        </PanelButtons>
        <PanelTitle>robot_navigation.rviz* - RViz</PanelTitle>
        <Tray>
          <TrayItem $w={22} $gap={11}>
            <Svg s={22}>
              <path d="M1 10q0-4 4-4 1-5 6-4 3-1 5 3 5 1 5 6l-4 4H3q-2-2-2-5" fill="#716e66" />
              <circle cx="13" cy="15" r="7" fill="#44423c" />
              <path d="M9.500 15.500h7" stroke="#99968d" strokeWidth="1.700" strokeDasharray="1.700 1" />
            </Svg>
          </TrayItem>
          <TrayItem $w={20} $gap={13}>
            <Svg s={20}><ChromeMark /></Svg>
          </TrayItem>
          <TrayItem $w={18} $gap={13}>
            <Svg s={18}>
              <path d="M5 1L10 6.500H7v7H3v-7H0zM13 17l5-5.500h-3V4.500h-4v7H8z" fill="#dfdbd2" />
            </Svg>
          </TrayItem>
          <TrayItem $w={20} $gap={11}><Keyboard>Es</Keyboard></TrayItem>
          <TrayItem $w={10} $gap={12}>
            <Svg s={10} h={16}>
              <path d="M1 4.500l7.500 7L5 15V1l3.500 3.500L1 11.500" stroke="#dfdbd2" strokeWidth="1.400" />
            </Svg>
          </TrayItem>
          <TrayItem $w={20} $gap={12}>
            <Svg s={20}>
              <path d="M0 7.500h3L8 4v12L3 12.500H0z" fill="#dfdbd2" />
              <path d="M10.500 7q2 3 0 6" stroke="#dfdbd2" strokeWidth="1.700" />
              <path d="M13 4.500q3.500 5.500 0 11M16 2.500q5 7.500 0 15" stroke="#8f8c83" strokeWidth="1.700" />
            </Svg>
          </TrayItem>
          <TrayItem $w={163} $gap={13}><Clock>sáb feb 11 2017 09:59:24</Clock></TrayItem>
          <TrayItem $w={17} $gap={0}>
            <Svg s={17}>
              <path d="M6 4.300a5 5 0 1 0 5 0" stroke="#dfdbd2" strokeWidth="1.800" />
              <path d="M8.500 .5v7" stroke="#dfdbd2" strokeWidth="2" />
              <path d="M4.300 4.800L2.700 3.200M12.700 4.800l1.600-1.600M3 8.700H.5M14 8.700h2.500M4.300 12.700l-1.600 1.600M12.700 12.700l1.600 1.600M8.500 14v2.500" stroke="#dfdbd2" strokeWidth="2" />
            </Svg>
          </TrayItem>
        </Tray>
      </TopPanel>

      <Body>
        <Launcher>
          {launcherItems.map((it, k) => (
            <Tile key={k} $bg={it.bg} $last={k === launcherItems.length - 1}>
              {it.pip && <Pip />}
              <Svg s={31}>{it.art}</Svg>
              {it.pipRight && <Pip $right />}
            </Tile>
          ))}
        </Launcher>

        <Main>
          <Toolbar>
            <Grip />
            {tools.map((t, k) => (
              <Tool key={k} $w={t.w} $active={t.active}>
                {t.icon}
                {t.label}
              </Tool>
            ))}
          </Toolbar>
          <Middle>
            <Viewport><Scene /></Viewport>
            <Collapse />
          </Middle>
          <StatusBar>
            <Button $w={50} $h={23}>Reset</Button>
            <Fps>17 fps</Fps>
          </StatusBar>
        </Main>
      </Body>

      <Displays>
        <DisplaysHead>
          <Svg>
            <rect x=".8" y="1.300" width="14.400" height="10.500" stroke="#111" strokeWidth="1.600" />
            <path d="M1.600 2h4.300v9H1.600z" fill="#c47a7a" /><path d="M5.900 2h4.300v9H5.900z" fill="#86d886" /><path d="M10.200 2h4.200v9h-4.200z" fill="#9a9ae0" />
            <path d="M8 12v2M3.500 15.200h9" stroke="#111" strokeWidth="1.600" />
          </Svg>
          <HeadText>Displays</HeadText>
          <CloseBox>
            <Svg s={8}><path d="M1 1l6 6M7 1L1 7" stroke="#4c4c4c" strokeWidth="2.400" /></Svg>
          </CloseBox>
        </DisplaysHead>
        <TreeArea>
          <Tree>
            {rows.map((r, k) => (
              <Row key={k} $selected={r.t === 'sel'}>
                <NameCell $level={r.l} $tone={r.t ?? 'plain'}>
                  <Expander>{r.x && <Arrow open={r.x === 'open'} />}</Expander>
                  {r.i && <RowIcon><Svg>{icons[r.i]}</Svg></RowIcon>}
                  {r.n}
                </NameCell>
                <ValueCell $wide={r.wide}>
                  {r.c && <Swatch $color={r.c} />}
                  {r.b === true && <CheckedBox />}
                  {r.b === false && <Unchecked />}
                  {r.v}
                </ValueCell>
              </Row>
            ))}
          </Tree>
          <Scrollbar>
            <ScrollButton><Svg s={7} h={4}><path d="M1 3.500h5L3.500 .8z" fill="#b0aeab" /></Svg></ScrollButton>
            <Thumb><ThumbGrip /></Thumb>
            <ScrollButton $down><Svg s={7} h={5}><path d="M.8 1h5.400L3.500 4.200z" fill="#555" /></Svg></ScrollButton>
          </Scrollbar>
        </TreeArea>
        <Splitter />
        <Description>
          <b>LaserScan (virtual sensor)</b>
          <br />
          Displays the data from a sensor_msgs::LaserScan message as points
          <br />
          in the world, drawn as points, billboards, or cubes. <More>More Information</More>.
        </Description>
        <DisplayButtons>
          {['Add', 'Duplicate', 'Remove', 'Rename'].map((b) => (
            <Button key={b} $w={111} $h={25}>{b}</Button>
          ))}
        </DisplayButtons>
      </Displays>

      <Dialog>
        <DialogBar>
          <WinButton kind="close" hot="red" />
          <WinButton kind="min" hot="gray" />
          <DialogTitle>Take Screenshot</DialogTitle>
        </DialogBar>
        <DialogBody>
          <Heading>Take Screenshot</Heading>
          <GrabArea>
            <CameraCell><Svg s={45} h={36}><CameraArt /></Svg></CameraCell>
            <Options $indent={0} $top={1}>
              <Option><Radio $on />Grab the whole screen</Option>
              <Option><Radio />Grab the current window</Option>
              <Option><Radio />Select area to grab</Option>
            </Options>
          </GrabArea>
          <DelayRow>
            <DelayLabel>Grab after a delay of</DelayLabel>
            <Spinner>
              <SpinCell $w={43} $first>0</SpinCell>
              <SpinCell $w={29}><Svg s={11}><path d="M.5 5.500h10" stroke="#a3a19e" strokeWidth="1.700" /></Svg></SpinCell>
              <SpinCell $w={28}><Svg s={11}><path d="M.5 5.500h10M5.500 .5v10" stroke="#3c3c3c" strokeWidth="1.900" /></Svg></SpinCell>
            </Spinner>
            seconds
          </DelayRow>
          <Options $indent={0} $top={14}>
            <Heading>Effects</Heading>
            <Options $indent={15} $top={1}>
              <Option><Check />Include pointer</Option>
              <Option $off>
                <Check $off><Svg s={14}><path d="M2.500 6.500l3.200 4.500 6.500-8.500" stroke="#a3a19e" strokeWidth="2.300" /></Svg></Check>
                Include the window border
              </Option>
            </Options>
          </Options>
          <EffectRow>
            <EffectLabel>Apply effect:</EffectLabel>
            <Combo>
              None
              <ComboArrow>
                <Svg s={9} h={6}><path d="M.5 .5h8L4.500 5.800z" fill="#8b8987" /></Svg>
              </ComboArrow>
            </Combo>
          </EffectRow>
          <TakeButton>Take Screenshot</TakeButton>
        </DialogBody>
      </Dialog>
    </Screen>
  );
}
